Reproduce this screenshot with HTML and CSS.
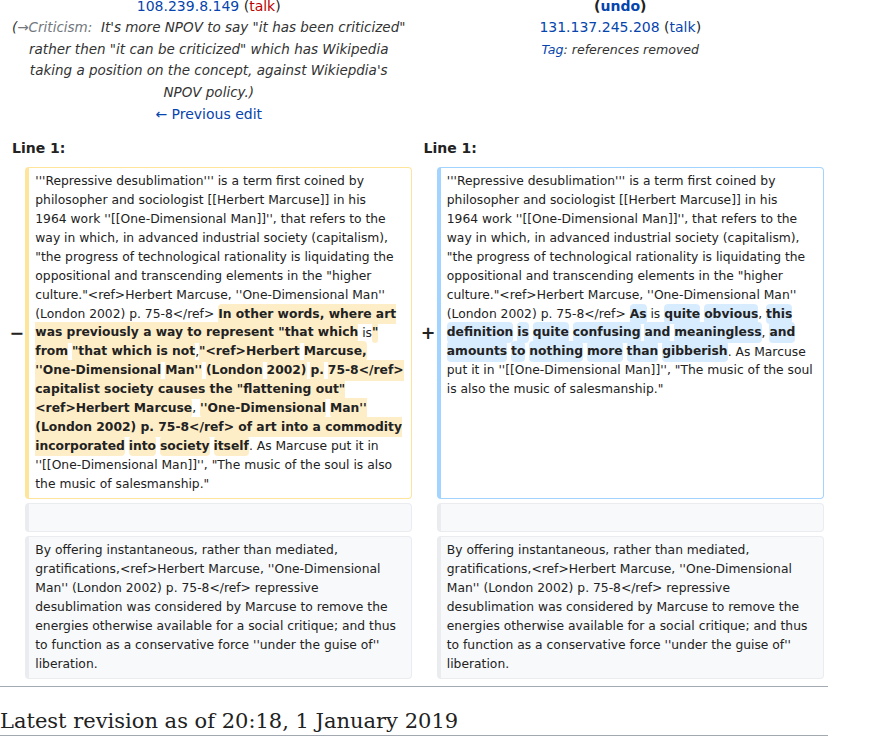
FILE: index.html
```
<!DOCTYPE html>
<html lang="en">
<head>
<meta charset="utf-8">
<title>Repressive desublimation: Difference between revisions</title>
<link rel="stylesheet" href="styles.css">
</head>
<body>
<div class="content">
<table class="diff">
<colgroup><col class="col-marker"><col class="col-content"><col class="col-marker"><col class="col-content"></colgroup>
<tr class="diff-title">
<td colspan="2" class="diff-otitle">
<div><a class="link" href="#">108.239.8.149</a> (<a class="link new" href="#">talk</a>)</div>
<div class="comment">(<span class="autocomment"><a class="auto-link" href="#">→Criticism:</a></span>&nbsp; It's more NPOV to say "it has been criticized"<br>rather then "it can be criticized" which has Wikipedia<br>taking a position on the concept, against Wikiepdia's<br>NPOV policy.)</div>
<div><a class="link" href="#">← Previous edit</a></div>
</td>
<td colspan="2" class="diff-ntitle">
<div class="undo">(<a class="link" href="#">undo</a>)</div>
<div><a class="link" href="#">131.137.245.208</a> (<a class="link" href="#">talk</a>)</div>
<div class="tags"><a class="link" href="#">Tag</a>: references removed</div>
</td>
</tr>
<tr>
<td colspan="2" class="diff-lineno">Line 1:</td>
<td colspan="2" class="diff-lineno">Line 1:</td>
</tr>
<tr>
<td class="diff-marker">−</td>
<td class="diff-deletedline"><div>'''Repressive desublimation''' is a term first coined by
philosopher and sociologist [[Herbert Marcuse]] in his
1964 work ''[[One-Dimensional Man]]'', that refers to the
way in which, in advanced industrial society (capitalism),
"the progress of technological rationality is liquidating the
oppositional and transcending elements in the "higher
culture."&lt;ref&gt;Herbert Marcuse, ''One-Dimensional Man''
(London 2002) p. 75-8&lt;/ref&gt; <del class="diffchange">In other words, where art
was previously a way to represent "that which</del> is<del class="diffchange">"</del>
<del class="diffchange">from</del> <del class="diffchange">"that which is not</del>,<del class="diffchange">"&lt;ref&gt;Herbert</del> <del class="diffchange">Marcuse,</del>
<del class="diffchange">''One-Dimensional</del> <del class="diffchange">Man''</del> <del class="diffchange">(London</del> <del class="diffchange">2002)</del> <del class="diffchange">p.</del> <del class="diffchange">75-8&lt;/ref&gt;
capitalist society causes the "flattening out"
&lt;ref&gt;Herbert Marcuse</del>, <del class="diffchange">''One-Dimensional</del> <del class="diffchange">Man''
(London 2002) p. 75-8&lt;/ref&gt; of art into a commodity
incorporated</del> <del class="diffchange">into</del> <del class="diffchange">society</del> <del class="diffchange">itself</del>. As Marcuse put it in
''[[One-Dimensional Man]]'', "The music of the soul is also
the music of salesmanship."</div></td>
<td class="diff-marker">+</td>
<td class="diff-addedline"><div>'''Repressive desublimation''' is a term first coined by
philosopher and sociologist [[Herbert Marcuse]] in his
1964 work ''[[One-Dimensional Man]]'', that refers to the
way in which, in advanced industrial society (capitalism),
"the progress of technological rationality is liquidating the
oppositional and transcending elements in the "higher
culture."&lt;ref&gt;Herbert Marcuse, ''One-Dimensional Man''
(London 2002) p. 75-8&lt;/ref&gt; <ins class="diffchange">As</ins> is <ins class="diffchange">quite</ins> <ins class="diffchange">obvious</ins>, <ins class="diffchange">this</ins>
<ins class="diffchange">definition</ins> <ins class="diffchange">is</ins> <ins class="diffchange">quite</ins> <ins class="diffchange">confusing</ins> <ins class="diffchange">and</ins> <ins class="diffchange">meaningless</ins>, <ins class="diffchange">and</ins>
<ins class="diffchange">amounts</ins> <ins class="diffchange">to</ins> <ins class="diffchange">nothing</ins> <ins class="diffchange">more</ins> <ins class="diffchange">than</ins> <ins class="diffchange">gibberish</ins>. As Marcuse
put it in ''[[One-Dimensional Man]]'', "The music of the soul
is also the music of salesmanship."</div></td>
</tr>
<tr>
<td class="diff-marker"></td>
<td class="diff-context"><br></td>
<td class="diff-marker"></td>
<td class="diff-context"><br></td>
</tr>
<tr>
<td class="diff-marker"></td>
<td class="diff-context"><div>By offering instantaneous, rather than mediated,
gratifications,&lt;ref&gt;Herbert Marcuse, ''One-Dimensional
Man'' (London 2002) p. 75-8&lt;/ref&gt; repressive
desublimation was considered by Marcuse to remove the
energies otherwise available for a social critique; and thus
to function as a conservative force ''under the guise of''
liberation.</div></td>
<td class="diff-marker"></td>
<td class="diff-context"><div>By offering instantaneous, rather than mediated,
gratifications,&lt;ref&gt;Herbert Marcuse, ''One-Dimensional
Man'' (London 2002) p. 75-8&lt;/ref&gt; repressive
desublimation was considered by Marcuse to remove the
energies otherwise available for a social critique; and thus
to function as a conservative force ''under the guise of''
liberation.</div></td>
</tr>
</table>
<hr class="diff-hr">
<h2 class="diff-currentversion-title">Latest revision as of 20:18, 1 January 2019</h2>
</div>
</body>
</html>
```
FILE: styles.css
```
html, body {
  margin: 0;
  padding: 0;
  background: #fff;
}
body {
  font-family: "DejaVu Sans", sans-serif;
  font-size: 14px;
  color: #222;
  overflow: hidden;
}
.content {
  width: 828px;
  margin-top: -13px;
}
.diff {
  border: 0;
  border-spacing: 4px;
  margin: 0 0 0 1px;
  width: 827px;
  table-layout: fixed;
}
.col-marker { width: 2%; }
.col-content { width: 48%; }
.diff td {
  padding: 0.33em 0.5em;
}
.diff-otitle, .diff-ntitle {
  text-align: center;
  vertical-align: top;
  line-height: 21.6px;
}
.link {
  color: #0645ad;
  text-decoration: none;
}
.link.new {
  color: #ba0000;
}
.comment {
  font-style: italic;
  font-size: 13.5px;
  color: #333;
  white-space: nowrap;
}
.auto-link {
  color: #72777d;
  text-decoration: none;
}
.autocomment {
  color: #72777d;
}
.undo {
  font-weight: bold;
}
.tags {
  font-style: italic;
  font-size: 12.6px;
  color: #333;
}
.diff-lineno {
  font-weight: bold;
  line-height: 20px;
}
.diff td.diff-marker {
  padding: 0.25em;
  text-align: right;
  font-weight: bold;
  font-size: 1.25em;
  line-height: 1.2;
}
.diff-deletedline, .diff-addedline, .diff-context {
  font-size: 88%;
  line-height: 18.94px;
  vertical-align: top;
  white-space: pre;
  border-style: solid;
  border-width: 1px 1px 1px 4px;
  border-radius: 0.33em;
}
.diff-deletedline { border-color: #ffe49c; }
.diff-addedline { border-color: #a3d3ff; }
.diff-context {
  background: #f8f9fa;
  border-color: #eaecf0;
  color: #222;
}
.diffchange {
  font-weight: bold;
  text-decoration: none;
  border-radius: 0.33em;
  padding: 0.25em 0;
}
.diff-deletedline .diffchange { background: #feeec8; }
.diff-addedline .diffchange { background: #d8ecff; }
.diff-hr {
  border: 0;
  height: 1px;
  background: #a2a9b1;
  margin: 3px 0;
}
.diff-currentversion-title {
  font-family: "DejaVu Serif", serif;
  font-weight: normal;
  font-size: 21px;
  line-height: 1.3;
  margin: 21px 0 0;
  padding: 0;
  border-bottom: 1px solid #a2a9b1;
}
```
